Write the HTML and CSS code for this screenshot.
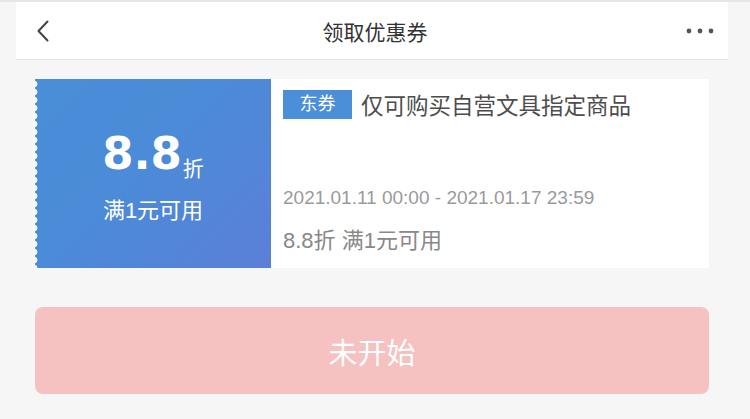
FILE: index.html
```html
<!DOCTYPE html>
<html lang="zh-CN">
<head>
    <meta charset="UTF-8">
    <meta name="viewport" content="width=device-width, initial-scale=1.0">
    <title>领取优惠券</title>
    <link rel="stylesheet" href="styles.css">
</head>
<body>
    <div class="page">
        <header class="nav-bar">
            <span class="nav-back">
                <svg width="14" height="22" viewBox="0 0 14 22">
                    <polyline points="11.5,1.5 2.5,11 11.5,20.5" fill="none" stroke="#444" stroke-width="2" stroke-linecap="round" stroke-linejoin="round"/>
                </svg>
            </span>
            <h1 class="nav-title">领取优惠券</h1>
            <span class="nav-more">
                <svg width="28" height="6" viewBox="0 0 28 6">
                    <circle cx="3" cy="3" r="2.4" fill="#555"/>
                    <circle cx="14" cy="3" r="2.4" fill="#555"/>
                    <circle cx="25" cy="3" r="2.4" fill="#555"/>
                </svg>
            </span>
        </header>

        <div class="content">
            <div class="coupon">
                <div class="coupon-left">
                    <div class="coupon-value"><span class="coupon-num">8.8</span><span class="coupon-unit">折</span></div>
                    <div class="coupon-limit">满1元可用</div>
                </div>
                <div class="coupon-right">
                    <div class="coupon-head">
                        <span class="coupon-tag">东券</span>
                        <span class="coupon-title">仅可购买自营文具指定商品</span>
                    </div>
                    <div class="coupon-date">2021.01.11 00:00 - 2021.01.17 23:59</div>
                    <div class="coupon-rule">8.8折 满1元可用</div>
                </div>
            </div>

            <button class="btn-get" disabled>未开始</button>
        </div>
    </div>
</body>
</html>
```

FILE: styles.css
```css
html, body {
    margin: 0;
    padding: 0;
}
body {
    background-color: #f6f6f6;
    font-family: "Liberation Sans", "Noto Sans CJK SC", sans-serif;
    color: #333;
}
.page {
    border-top: 2px solid #e5e5ea;
    padding: 0 22px 0 16px;
}
.nav-bar {
    display: flex;
    align-items: center;
    justify-content: space-between;
    height: 57px;
    background-color: #fff;
    border-bottom: 1px solid #e6e6e6;
    padding: 0 14px 0 20px;
}
.nav-back {
    display: flex;
    width: 60px;
}
.nav-title {
    margin: 0;
    font-size: 21px;
    font-weight: normal;
    color: #333;
}
.nav-more {
    display: flex;
    justify-content: flex-end;
    width: 60px;
}
.content {
    padding: 19px 19px 0;
}
.coupon {
    display: flex;
    height: 189px;
    background-color: #fff;
}
.coupon-left {
    position: relative;
    width: 236px;
    display: flex;
    flex-direction: column;
    align-items: center;
    padding-top: 52px;
    box-sizing: border-box;
    color: #fff;
    background: linear-gradient(135deg, #4a8ed8 0%, #4b8bd7 45%, #5b7fd8 100%);
}
/* scalloped left edge */
.coupon-left::before {
    content: "";
    position: absolute;
    left: -4px;
    top: 0;
    bottom: 0;
    width: 8px;
    background: radial-gradient(circle at 3px 4px, #f6f6f6 3.2px, transparent 3.7px) 0 1px / 8px 8px repeat-y;
}
.coupon-value {
    line-height: 1;
    height: 46px;
}
.coupon-num {
    font-family: "DejaVu Sans", sans-serif;
    font-size: 45px;
    font-weight: bold;
    line-height: 1;
}
.coupon-unit {
    font-size: 21px;
    line-height: 1;
    margin-left: 1px;
    vertical-align: -7px;
}
.coupon-limit {
    font-size: 22px;
    line-height: 26px;
    margin-top: 21px;
}
.coupon-right {
    flex: 1;
    padding: 9px 12px 0;
}
.coupon-head {
    display: flex;
    align-items: center;
    gap: 9px;
}
.coupon-tag {
    display: inline-block;
    width: 69px;
    height: 29px;
    line-height: 29px;
    text-align: center;
    font-size: 18px;
    color: #fff;
    background-color: #4a8fd8;
}
.coupon-title {
    font-size: 22.5px;
    color: #4d4d4d;
}
.coupon-date {
    margin-top: 67px;
    font-size: 19px;
    line-height: 22px;
    color: #9a9a9a;
}
.coupon-rule {
    margin-top: 20px;
    font-size: 22px;
    line-height: 24px;
    color: #888;
}
.btn-get {
    display: block;
    width: 100%;
    height: 87px;
    margin-top: 39px;
    border: none;
    border-radius: 8px;
    background-color: #f6c1c1;
    color: #fff;
    font-family: inherit;
    font-size: 29px;
}
```
